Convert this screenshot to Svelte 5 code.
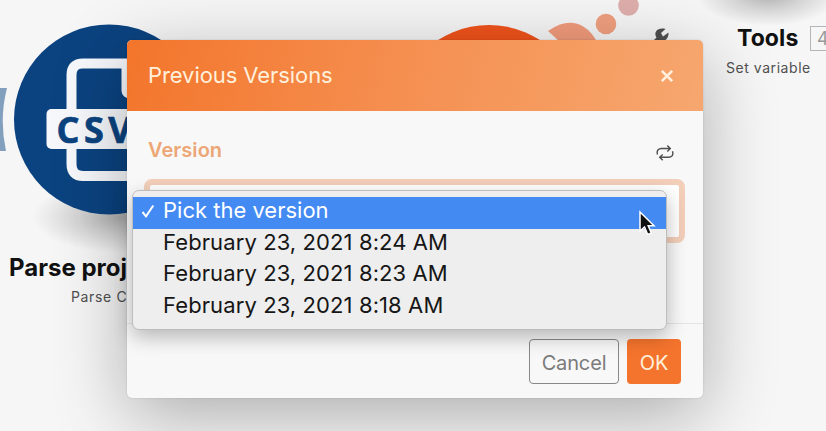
<script>
  const options = [
    'Pick the version',
    'February 23, 2021 8:24 AM',
    'February 23, 2021 8:23 AM',
    'February 23, 2021 8:18 AM'
  ];
  let selected = $state(0);
</script>

<main class="stage">
  <svg class="scene" width="826" height="431" viewBox="0 0 826 431" aria-hidden="true">
    <defs>
      <radialGradient id="soft">
        <stop offset="0" stop-color="#000" stop-opacity=".28" />
        <stop offset=".5" stop-color="#000" stop-opacity=".13" />
        <stop offset="1" stop-color="#000" stop-opacity="0" />
      </radialGradient>
    </defs>
    <ellipse cx="120" cy="217" rx="88" ry="36" fill="url(#soft)" />
    <ellipse cx="768" cy="-5" rx="72" ry="31" fill="url(#soft)" />
    <path d="M0 88H7Q-1 119 6 151H0Z" fill="#829fbe" />
    <circle cx="109" cy="119.500" r="95" fill="#0b4380" />
    <path d="M136 63.500H83Q71.500 63.500 71.500 75V164Q71.500 176 83 176H150" fill="none" stroke="#f6f8fb" stroke-width="10" />
    <path d="M124.500 66V90Q124.500 96 134 96" fill="none" stroke="#f6f8fb" stroke-width="6" />
    <rect x="46.500" y="109" width="125" height="40" rx="5" fill="#f6f8fb" />
    <text x="56.500" y="142.500" class="csv">CSV</text>
    <circle cx="489" cy="119" r="94" fill="#f0531b" />
    <path d="M548 31Q568 17 584 27Q592 32 597 42H560Z" fill="#f29b7c" />
    <circle cx="606" cy="24" r="10.300" fill="#f0a07f" />
    <circle cx="628.500" cy="5.500" r="10.300" fill="#deaeac" />
    <path d="M652 42L656.500 37.500C653 32 658 27 665.500 29L661 33L663 36.500L668.500 32.500C669 38 665 41.500 662 41L660 44Z" fill="#505050" />
  </svg>

  <div class="node parse">
    <strong>Parse project</strong>
    <span>Parse CSV</span>
  </div>
  <div class="node tools">
    <div class="line"><strong>Tools</strong><b>4</b></div>
    <span>Set variable</span>
  </div>

  <section class="modal">
    <header>
      <h1>Previous Versions</h1>
      <button class="close" aria-label="Close">
        <svg width="14" height="14" viewBox="0 0 14 14"><path d="M1.800 1.800L12.200 12.200M12.200 1.800L1.800 12.200" /></svg>
      </button>
    </header>
    <div class="body">
      <div class="label">
        <h2>Version</h2>
        <svg width="18" height="18" viewBox="0 0 18 18" class="refresh">
          <path d="M1.500 10.500C.3 6.500 2.500 4.500 5.500 4.500H14M11.300 1.500L14.300 4.500L11.300 7.500M16.500 7.300C17.700 11.500 15.500 13.300 12.500 13.300H4M6.700 10.500L3.700 13.300L6.700 16.300" />
        </svg>
      </div>
      <div class="select"></div>
      <ul class="menu">
        {#each options as option, i}
          <li>
            <button class:active={selected === i} onclick={() => (selected = i)}>
              <span class="check">
                {#if selected === i}
                  <svg width="14" height="14" viewBox="0 0 14 14"><path d="M1.500 8L5 12.300L12.300 1.500" /></svg>
                {/if}
              </span>
              <span class="text">{option}</span>
            </button>
          </li>
        {/each}
      </ul>
    </div>
    <footer>
      <button class="cancel">Cancel</button>
      <button class="ok">OK</button>
    </footer>
  </section>

  <svg class="cursor" width="20" height="28" viewBox="0 0 20 28" aria-hidden="true">
    <path d="M2 2V21L6.500 17L9.700 24.500L13.300 23L10.200 15.800H16Z" />
  </svg>
</main>

<style>
  :global(body) { margin: 0; }
  .stage {
    position: relative;
    width: 826px;
    height: 431px;
    overflow: hidden;
    background: #f6f6f6;
    font-family: Inter, "Liberation Sans", sans-serif;
  }
  .scene { position: absolute; inset: 0; }
  .csv {
    font: 700 36px "Open Sans", sans-serif;
    letter-spacing: 4.500px;
    fill: #0b4380;
    stroke: #0b4380;
    stroke-width: .7px;
  }
  .node {
    position: absolute;
    white-space: nowrap;
    color: #111;
  }
  .node strong { font-weight: 700; font-size: 23px; line-height: 28px; }
  .node span { display: block; font-size: 14px; line-height: 18px; color: #505050; }
  .parse { left: 9px; top: 254px; }
  .parse strong { font-size: 24px; letter-spacing: 0; }
  .parse span { margin: 6px 0 0 62px; letter-spacing: .65px; }
  .tools { left: 726px; top: 24px; }
  .tools .line { display: flex; align-items: center; padding-left: 11px; gap: 12px; }
  .tools strong { width: 61px; letter-spacing: .1px; }
  .tools b {
    box-sizing: border-box;
    width: 30px;
    height: 25px;
    padding-left: 6px;
    border: 1px solid #b5b5b5;
    font-size: 18px;
    line-height: 23px;
    font-weight: 400;
    color: #999;
  }
  .tools span { margin-top: 7px; letter-spacing: .55px; }
  button { font: inherit; border: 0; padding: 0; background: none; }
  .modal {
    position: absolute;
    left: 127px;
    top: 40px;
    width: 576px;
    height: 358px;
    border-radius: 5px;
    background: #f8f8f8;
    box-shadow: 0 18px 72px rgba(0, 0, 0, .3), 0 0 2px rgba(0, 0, 0, .16);
    display: flex;
    flex-direction: column;
  }
  header {
    box-sizing: border-box;
    height: 71px;
    padding: 0 29px 0 21px;
    border-radius: 5px 5px 0 0;
    background: linear-gradient(105deg, #f3752b, #f59052 50%, #f6a76f);
    display: flex;
    align-items: center;
    justify-content: space-between;
  }
  h1, h2 { margin: 0; }
  h1 { padding-bottom: 2px; font-size: 22px; font-weight: 400; letter-spacing: -.08px; color: #fff0dc; }
  .close, .close svg { display: block; }
  .close path { fill: none; stroke: #fff0dc; stroke-width: 2.600; }
  .body { position: relative; flex: 1; padding: 23px 18px 0 17px; }
  .label { display: flex; align-items: center; justify-content: space-between; height: 30px; padding: 0 11px 0 4px; }
  h2 { padding-top: 1px; font-size: 20px; font-weight: 600; letter-spacing: .05px; color: #eda675; }
  .refresh { margin-top: 7px; }
  .refresh path { fill: none; stroke: #4e4e4e; stroke-width: 1.400; }
  .select {
    box-sizing: border-box;
    height: 64px;
    margin-top: 15px;
    border: 6px solid #f3cfba;
    border-radius: 8px;
    background: #fff;
  }
  .menu {
    position: absolute;
    left: 5px;
    top: 79px;
    box-sizing: border-box;
    width: 535px;
    height: 140px;
    margin: 0;
    padding: 6px 0 0;
    list-style: none;
    border: 1px solid #bdbdbd;
    border-radius: 7px;
    background: #eee;
    box-shadow: 0 7px 20px rgba(0, 0, 0, .27);
  }
  .menu button {
    box-sizing: border-box;
    display: flex;
    align-items: center;
    width: 100%;
    height: 31.500px;
    padding: 0 0 5px 8px;
    font-size: 22px;
    line-height: 26px;
    letter-spacing: .1px;
    color: #161616;
    text-align: left;
  }
  .menu .active { background: #438af3; color: #fff; letter-spacing: 0; }
  .check { width: 22px; height: 12px; }
  .check svg { display: block; }
  .check path { fill: none; stroke: #fff; stroke-width: 2; }
  footer {
    box-sizing: border-box;
    height: 75px;
    padding: 15px 22px 0 0;
    border-top: 1px solid #e4e4e4;
    display: flex;
    justify-content: flex-end;
    gap: 8px;
  }
  footer button { box-sizing: border-box; height: 45px; border-radius: 4px; font-size: 20px; padding-top: 2px; }
  .cancel { width: 90px; border: 1.500px solid #888; color: #7b7b7b; letter-spacing: -.15px; }
  .ok { width: 54px; background: #f5742d; color: #fff0dc; letter-spacing: -.2px; }
  .cursor { position: absolute; left: 638px; top: 210px; }
  .cursor path { fill: #111; stroke: #fff; stroke-width: 1.500; }
</style>
